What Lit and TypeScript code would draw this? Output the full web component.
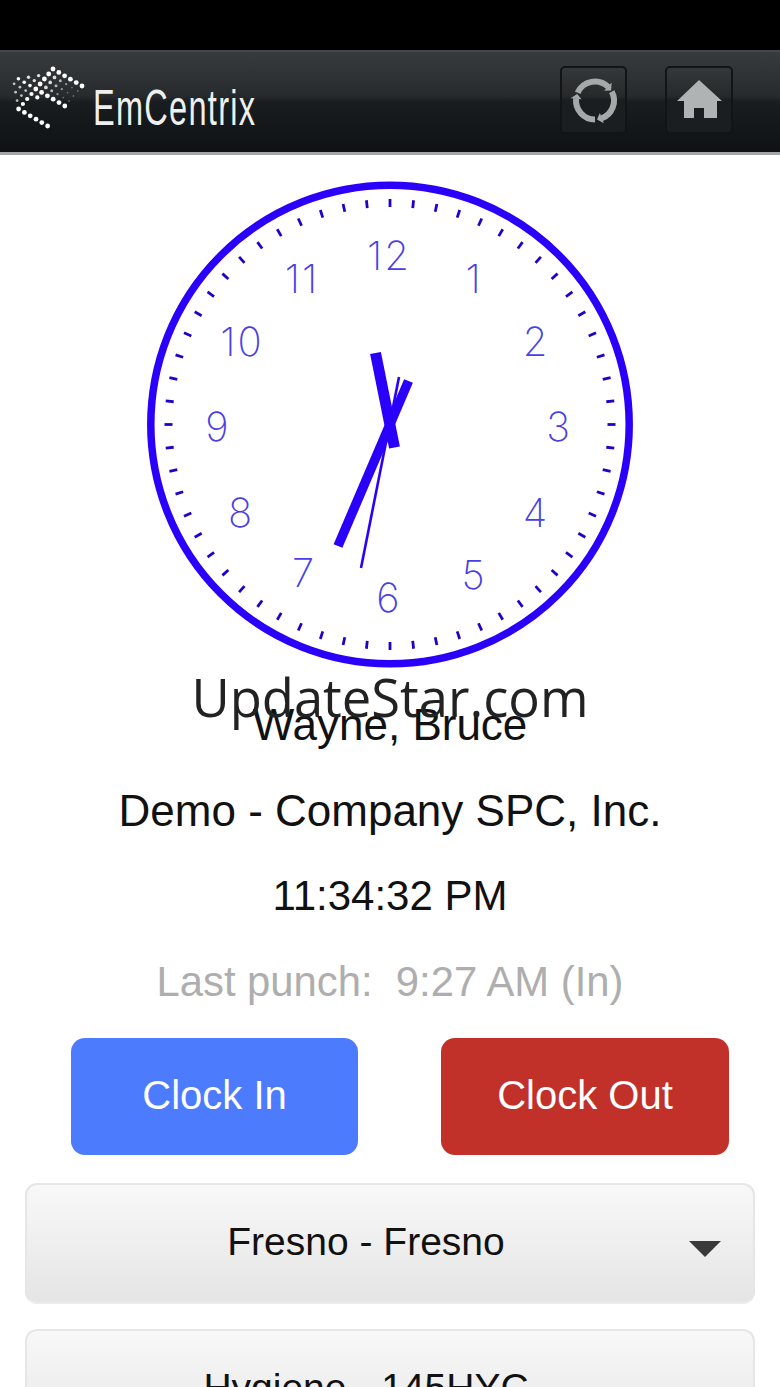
import { LitElement, html, css, svg } from "lit";
import { customElement } from "lit/decorators.js";

const CX = 390;
const CY = 424.5;
const NUMS: [string, number, number][] = [
  ["12", 389, 255], ["1", 474, 278], ["2", 536, 341], ["3", 559, 426],
  ["4", 536, 512], ["5", 474, 574], ["6", 389, 597], ["7", 304, 572],
  ["8", 241, 512], ["9", 218, 426], ["10", 242, 341], ["11", 302, 278],
];

function ticks() {
  const out = [];
  for (let i = 0; i < 60; i++) {
    const a = (i * Math.PI) / 30;
    const s = Math.sin(a);
    const c = Math.cos(a);
    out.push(svg`<line class="tick" x1=${CX + 217.5 * s} y1=${CY - 217.5 * c} x2=${CX + 225.5 * s} y2=${CY - 225.5 * c}></line>`);
  }
  return out;
}

function logoDots() {
  const ranges: [number, number][] = [
    [0, 5], [0, 5], [-1, 5], [-2, 5], [-3, 5], [-3, 1], [-2, 0], [-1, 0], [0, 5],
  ];
  const out = [];
  ranges.forEach(([from, to], i) => {
    for (let j = from; j <= to; j++) {
      const x = 53 - 4.3 * i + 5.8 * j;
      const y = 68 + 5 * i + 3.4 * j;
      let r = 2.4;
      let o = 1;
      if (i >= 1 && i <= 3 && j > 0) {
        r = Math.max(0.9, 2.2 - 0.35 * j);
        o = Math.max(0.3, 1 - 0.17 * j);
      } else if (i === 4) {
        r = j < 0 ? 1.8 : 2.4;
      } else if (i >= 5 && i <= 7) {
        r = j < 0 ? 1.4 : 2.1;
        o = j < 0 ? 0.7 : 1;
      } else if (i >= 1 && i <= 3 && j < 0) {
        r = 1.7;
        o = 0.85;
      }
      out.push(svg`<circle cx=${x} cy=${y} r=${r} fill="#fff" opacity=${o}></circle>`);
    }
  });
  return out;
}

function polar(r: number, deg: number): string {
  const a = (deg * Math.PI) / 180;
  return `${(26 + r * Math.sin(a)).toFixed(2)} ${(26 - r * Math.cos(a)).toFixed(2)}`;
}

function refreshIcon() {
  const R = 19;
  const segs: [number, number][] = [[294, 44], [62, 160], [180, 276]];
  return segs.map(([a, b]) => {
    const tip = b + 14;
    return svg`
      <path fill="none" stroke="#a6a9a9" stroke-width="6" d="M${polar(R, a)} A${R} ${R} 0 0 1 ${polar(R, b)}"></path>
      <path fill="#a6a9a9" d="M${polar(R - 5.5, b - 1)} L${polar(R + 5.5, b - 1)} L${polar(R, tip)} Z"></path>`;
  });
}

@customElement("app-root")
export class AppRoot extends LitElement {
  static styles = css`
    :host {
      display: block;
      width: 780px;
      height: 1387px;
      overflow: hidden;
      background: #fff;
      font-family: "Liberation Sans", Arial, sans-serif;
    }
    .status { height: 50px; background: #000; }
    .header {
      box-sizing: border-box;
      height: 105px;
      display: flex;
      align-items: center;
      padding: 0 47px 5px 0;
      border-top: 2px solid #45484a;
      border-bottom: 3px solid #a4a6a7;
      background: linear-gradient(#383b3d 0%, #282b2d 44%, #1a1d1f 50%, #0f1214 100%);
    }
    .logo { width: 90px; height: 98px; flex: none; }
    .logo svg { display: block; }
    .brand {
      font-family: "Liberation Sans", sans-serif;
      font-size: 50px;
      line-height: 50px;
      letter-spacing: 2px;
      color: #eef0f0;
      display: inline-block;
      transform: scaleX(0.65);
      transform-origin: left center;
      white-space: nowrap;
      margin: 17px 0 0 3px;
    }
    .spacer { flex: 1; }
    .hbtn {
      box-sizing: border-box;
      width: 68px;
      height: 68px;
      border: 2px solid #121416;
      border-radius: 5px;
      margin-left: 38px;
      display: flex;
      align-items: center;
      justify-content: center;
      background: linear-gradient(#35383a 0%, #27292b 44%, #1b1e20 50%, #1b1e20 100%);
    }
    .hbtn.refresh { width: 67px; }
    .clock { display: block; width: 780px; height: 527px; }
    .rim { fill: none; stroke: #2a00fa; stroke-width: 7.5; }
    .tick { stroke: #2200c8; stroke-width: 2.8; }
    .num {
      font-family: Inter, "Liberation Sans", sans-serif;
      font-weight: 200;
      font-size: 40px;
      letter-spacing: 2px;
      fill: #4a3fe6;
      text-anchor: middle;
      dominant-baseline: central;
    }
    .hand { stroke: #2a00fa; }
    .info { position: relative; }
    .row {
      height: 85.5px;
      line-height: 85.5px;
      text-align: center;
      font-size: 42px;
      color: #111;
      white-space: pre;
    }
    .row.big { font-size: 44px; }
    .row.muted { color: #aeaeae; font-size: 41.8px; }
    .watermark {
      position: absolute;
      left: 0;
      right: 0;
      top: -25px;
      text-align: center;
      font-family: "Open Sans", sans-serif;
      font-size: 52.5px;
      line-height: 80px;
      color: #222;
    }
    .actions {
      display: flex;
      justify-content: space-between;
      padding: 14px 51px 0 71px;
    }
    .act {
      box-sizing: border-box;
      width: 288px;
      height: 117px;
      border-radius: 14px;
      display: flex;
      align-items: center;
      justify-content: center;
      color: #fff;
      font-size: 40px;
      padding-bottom: 2px;
    }
    .in { background: #4c7bfd; width: 287px; }
    .out { background: #c2302a; }
    .select {
      box-sizing: border-box;
      position: relative;
      height: 121px;
      margin: 28px 25px 0;
      border: 2px solid #e6e6e6;
      border-bottom-color: #ececec;
      border-radius: 12px;
      background: linear-gradient(#f8f8f8, #e5e5e5);
      display: flex;
      align-items: center;
      justify-content: center;
      font-size: 39px;
      color: #111;
      padding: 0 48px 4px 0;
    }
    .select + .select { margin-top: 25px; }
    .arrow {
      position: absolute;
      right: 32px;
      top: 56px;
      width: 0;
      height: 0;
      border-left: 16px solid transparent;
      border-right: 16px solid transparent;
      border-top: 16px solid #3a3a3a;
    }
  `;

  render() {
    return html`
      <div class="status"></div>
      <div class="header">
        <div class="logo">
          <svg width="90" height="98" viewBox="0 50 90 98">${logoDots()}</svg>
        </div>
        <span class="brand">EmCentrix</span>
        <div class="spacer"></div>
        <div class="hbtn refresh">
          <svg width="52" height="52" viewBox="-1 -0.5 52 52">${refreshIcon()}</svg>
        </div>
        <div class="hbtn">
          <svg width="50" height="44" viewBox="0 0 50 44">
            <path fill="#b0b3b3" d="M25 2 L48 23 L43 23 L43 40 L30 40 L30 30 L20 30 L20 40 L10 40 L10 23 L3 23 Z"></path>
          </svg>
        </div>
      </div>
      <svg class="clock" viewBox="0 155 780 527">
        <circle class="rim" cx=${CX} cy=${CY} r="239.2"></circle>
        ${ticks()}
        ${NUMS.map(([t, x, y]) => svg`<text class="num" x=${x} y=${y}>${t}</text>`)}
        <line class="hand" x1="375.5" y1="353" x2="394.5" y2="447.5" stroke-width="11"></line>
        <line class="hand" x1="338" y1="546" x2="408.5" y2="381" stroke-width="9.5"></line>
        <line class="hand" x1="361" y1="568" x2="399" y2="377" stroke-width="2.6"></line>
      </svg>
      <div class="info">
        <div class="row big">Wayne, Bruce</div>
        <div class="row big">Demo - Company SPC, Inc.</div>
        <div class="row">11:34:32 PM</div>
        <div class="row muted">Last punch:  9:27 AM (In)</div>
        <div class="watermark">UpdateStar.com</div>
      </div>
      <div class="actions">
        <div class="act in">Clock In</div>
        <div class="act out">Clock Out</div>
      </div>
      <div class="select">Fresno - Fresno<span class="arrow"></span></div>
      <div class="select">Hygiene - 145HYC<span class="arrow"></span></div>
    `;
  }
}
